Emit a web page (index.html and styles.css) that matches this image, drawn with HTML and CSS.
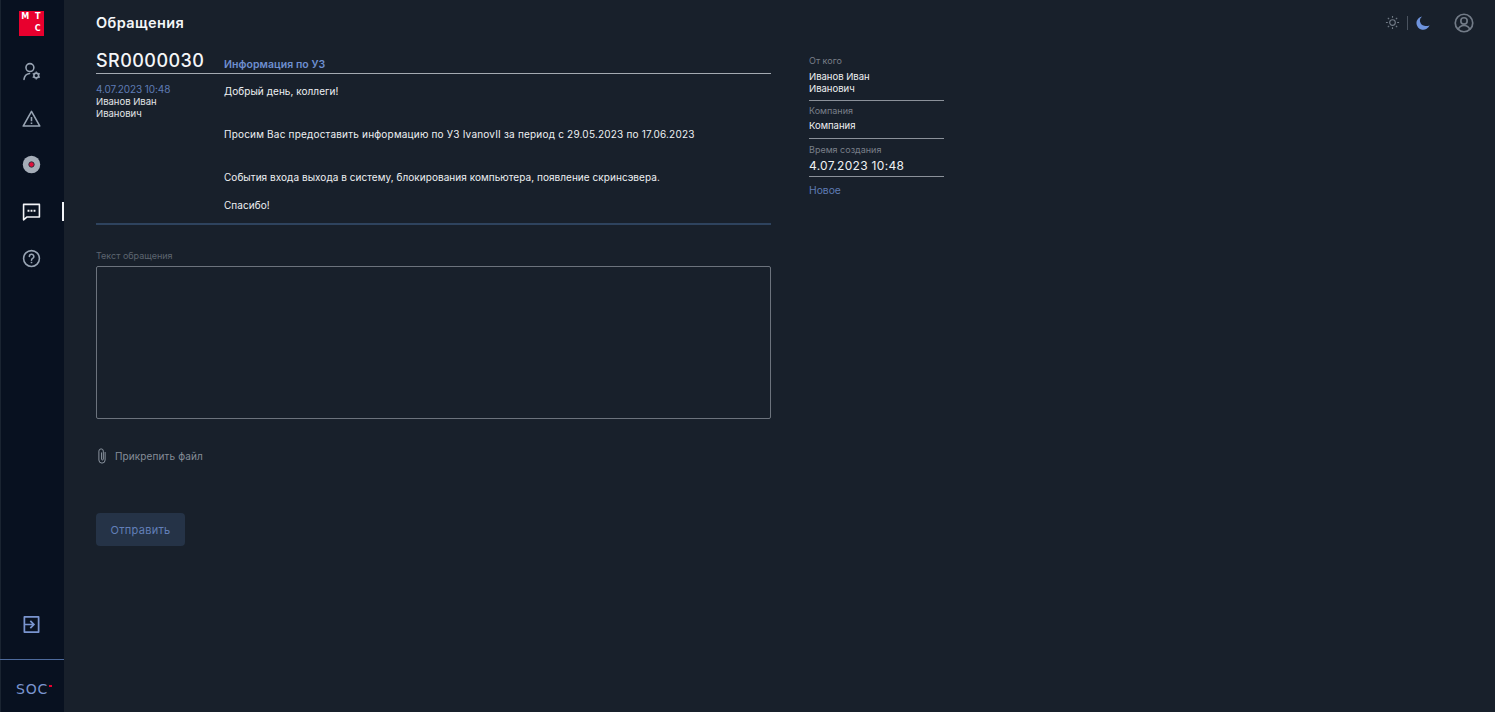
FILE: index.html
```html
<!DOCTYPE html>
<html lang="ru">
<head>
<meta charset="utf-8">
<title>Обращения</title>
<link rel="stylesheet" href="styles.css">
</head>
<body>
<div class="app">
  <nav class="sidebar">
    <div class="logo"><span>М</span><span>Т</span><span></span><span>С</span></div>
    <div class="nav-items">
      <a class="nav-item"><svg viewBox="0 0 24 24" class="ico" fill="none" stroke="#98a4b3" stroke-width="2"><circle cx="10" cy="7" r="5"/><path d="M2.500 22c.5-4 3-7 7-7.500" stroke-linecap="round"/><circle cx="18" cy="17" r="3"/><path d="M18 12v1.500M18 20.500v1.500M13.500 14.500l1.500 1M21 18.500l1.500 1M13.500 19.500l1.500-1M21 15.500l1.500-1" stroke-width="1.600"/></svg></a>
      <a class="nav-item"><svg viewBox="0 0 24 24" class="ico" fill="none" stroke="#98a4b3" stroke-width="2"><path d="M12 3 1.500 21.500h21z" stroke-linejoin="round"/><path d="M12 10v5.500M12 17.200v1.600"/></svg></a>
      <a class="nav-item"><svg viewBox="0 0 24 24" class="ico"><circle cx="12" cy="12" r="11" fill="#a5adb8"/><circle cx="12" cy="12" r="3.400" fill="#e0103c" stroke="#2a2f3d" stroke-width="1.200"/></svg></a>
      <a class="nav-item active"><svg viewBox="0 0 24 24" class="ico" fill="none" stroke="#f2f4f7" stroke-width="2"><path d="M2 3h20v16H6l-4 3.500z" stroke-linejoin="round"/><path d="M7 11h2.400M10.800 11h2.400M14.600 11h2.400" stroke-width="2.400"/></svg></a>
      <a class="nav-item"><svg viewBox="0 0 24 24" class="ico" fill="none" stroke="#98a4b3" stroke-width="2"><circle cx="12" cy="12" r="10"/><path d="M9.300 9.500a2.800 2.800 0 1 1 4.200 2.400c-1 .6-1.500 1.100-1.500 2.300" stroke-linecap="round"/><path d="M12 16.200v1.800"/></svg></a>
    </div>
    <a class="collapse"><svg viewBox="0 0 24 24" class="ico" fill="none" stroke="#7a95cf" stroke-width="2.200"><path d="M3 2.500h18v19H3z" stroke-linejoin="round"/><path d="M3 12h12M10.500 7.500l4.500 4.500-4.500 4.500"/></svg></a>
    <div class="brand">SOC<i class="brand-mark"></i></div>
  </nav>
  <main class="main">
    <header class="topbar">
      <h1>Обращения</h1>
      <div class="tools">
        <svg viewBox="0 0 16 16" class="tool-sun" fill="none" stroke="#727b87" stroke-width="1.200"><circle cx="8" cy="8" r="3"/><path d="M8 1v2M8 13v2M1 8h2M13 8h2M3 3l1.400 1.400M11.600 11.600 13 13M3 13l1.400-1.400M11.600 4.400 13 3"/></svg>
        <span class="tool-sep"></span>
        <svg viewBox="0 0 16 16" class="tool-moon"><path d="M7 .5A7.700 7.700 0 1 0 15.500 10.500 7 7 0 0 1 9.500 11 5.800 5.800 0 0 1 7 .5z" fill="#6e93dc"/></svg>
        <svg viewBox="0 0 24 24" class="tool-user" fill="none" stroke="#727b87" stroke-width="2"><circle cx="12" cy="12" r="10.500"/><circle cx="12" cy="9.500" r="3.800"/><path d="M5 20c1-3.500 3.500-5 7-5s6 1.500 7 5"/></svg>
      </div>
    </header>
    <div class="content">
      <section class="ticket">
        <div class="ticket-head">
          <div class="ticket-id">SR0000030</div>
          <div class="ticket-subject">Информация по УЗ</div>
        </div>
        <div class="message">
          <div class="meta">
            <div class="meta-date">4.07.2023 10:48</div>
            <div class="meta-name">Иванов Иван Иванович</div>
          </div>
          <div class="body">
            <p>Добрый день, коллеги!</p>
            <p class="gap wide">Просим Вас предоставить информацию по УЗ IvanovII за период с 29.05.2023 по 17.06.2023</p>
            <p class="gap">События входа выхода в систему, блокирования компьютера, появление скринсэвера.</p>
            <p class="gap-sm">Спасибо!</p>
          </div>
        </div>
        <label class="field-label" for="text">Текст обращения</label>
        <textarea id="text" class="field"></textarea>
        <div class="attach">
          <svg viewBox="0 0 12 18" class="clip" fill="none" stroke="#8b94a0" stroke-width="1.100"><path d="M9.500 4.500v9a3.500 3.500 0 0 1-7 0V3.500a2.500 2.500 0 0 1 5 0v9a1 1 0 0 1-2 0V5"/></svg>
          <span>Прикрепить файл</span>
        </div>
        <button class="send" type="button">Отправить</button>
      </section>
      <aside class="info">
        <div class="info-block from">
          <div class="info-label">От кого</div>
          <div class="info-value">Иванов Иван Иванович</div>
        </div>
        <div class="info-block company">
          <div class="info-label">Компания</div>
          <div class="info-value">Компания</div>
        </div>
        <div class="info-block created">
          <div class="info-label">Время создания</div>
          <div class="info-time">4.07.2023 10:48</div>
        </div>
        <div class="status">Новое</div>
      </aside>
    </div>
  </main>
</div>
</body>
</html>
```

FILE: styles.css
```css
* { box-sizing: border-box; }
html, body { margin: 0; height: 100%; }
body {
  background: #18202b;
  color: #f2f4f7;
  font-family: Inter, "Noto Sans", sans-serif;
  overflow: hidden;
}
.app { display: flex; height: 712px; }

.sidebar {
  width: 64px;
  flex: none;
  background: #081120;
  box-shadow: inset 1px 0 0 #1a2431;
  display: flex;
  flex-direction: column;
  align-items: center;
  padding-right: 1px;
}
.logo {
  width: 25px;
  height: 25px;
  margin-top: 11px;
  background: #e8002e;
  display: grid;
  grid-template-columns: 1fr 1fr;
  grid-template-rows: 1fr 1fr;
  padding: 1px 0 0;
  font-family: "DejaVu Sans", sans-serif;
  font-size: 8px;
  font-weight: 700;
  line-height: 10px;
  color: #fff;
  text-align: center;
}
.nav-items {
  margin-top: 12px;
  display: flex;
  flex-direction: column;
  align-self: stretch;
  flex: 1;
}
.nav-item {
  height: 46.750px;
  display: flex;
  align-items: center;
  justify-content: center;
  position: relative;
}
.ico { width: 19px; height: 19px; display: block; }
.nav-item.active::after {
  content: "";
  position: absolute;
  right: -1px;
  top: 14px;
  width: 2px;
  height: 19px;
  background: #f2f4f7;
}
.collapse { height: 24px; margin-bottom: 20px; }
.brand {
  align-self: stretch;
  margin-right: -1px;
  height: 53px;
  border-top: 1px solid #4d6a9c;
  color: #7a95cf;
  font-family: "DejaVu Sans", sans-serif;
  font-size: 14px;
  letter-spacing: .8px;
  text-align: center;
  line-height: 59px;
  position: relative;
}
.brand-mark {
  position: absolute;
  left: 49px;
  top: 25px;
  width: 3px;
  height: 1.500px;
  background: #e8002e;
}

.main { flex: 1; padding: 0 0 0 32px; min-width: 0; }
.topbar {
  height: 45px;
  display: flex;
  align-items: center;
  justify-content: space-between;
}
.topbar h1 {
  margin: 0;
  font-size: 14.500px;
  font-weight: 600;
  letter-spacing: .4px;
  color: #f4f6f8;
}
.tools { display: flex; align-items: center; padding-right: 21px; }
.tool-sun { width: 15px; height: 15px; }
.tool-sep { width: 1px; height: 14px; background: #4a535f; margin: 0 8px 0 7px; }
.tool-moon { width: 14px; height: 14px; margin-right: 24px; }
.tool-user { width: 20px; height: 20px; }

.content { display: flex; gap: 38px; align-items: flex-start; }
.ticket { width: 675px; flex: none; }
.ticket-head {
  display: flex;
  align-items: flex-end;
  height: 29px;
  border-bottom: 1px solid #a4aab2;
}
.ticket-id {
  width: 128px;
  font-size: 18px;
  font-weight: 500;
  letter-spacing: .45px;
  line-height: 27px;
  margin-bottom: -1px;
  color: #f4f6f8;
}
.ticket-subject {
  font-size: 10.500px;
  font-weight: 600;
  color: #6e8fd0;
  line-height: 14px;
  letter-spacing: .05px;
  margin-bottom: 1px;
}
.message {
  display: flex;
  height: 151px;
  border-bottom: 2px solid #2e435e;
  padding-top: 9px;
}
.meta { width: 128px; flex: none; font-size: 9.500px; line-height: 12px; padding-right: 50px; }
.meta-date { color: #5f7cb5; font-size: 10px; white-space: nowrap; letter-spacing: -.08px; line-height: 12px; }
.meta-name { color: #e2e5e9; margin-top: 1px; }
.body { font-size: 10px; line-height: 14px; color: #eef0f3; padding-top: 1px; }
.body p { margin: 0; white-space: nowrap; letter-spacing: .05px; }
.body .wide { letter-spacing: .2px; }
.body .gap { margin-top: 29px; }
.body .gap-sm { margin-top: 14px; }

.field-label {
  display: block;
  margin-top: 25px;
  font-size: 9px;
  line-height: 12px;
  color: #5d6570;
}
.field {
  display: block;
  width: 675px;
  height: 153px;
  margin-top: 4px;
  background: transparent;
  border: 1px solid #6c737d;
  border-radius: 2px;
  resize: none;
  outline: none;
}
.attach {
  display: flex;
  align-items: center;
  gap: 7px;
  margin-top: 29px;
  height: 16px;
  font-size: 10px;
  color: #858d98;
  letter-spacing: .12px;
}
.clip { width: 12px; height: 16px; }
.send {
  display: block;
  margin-top: 49px;
  width: 89px;
  height: 33px;
  border: 0;
  border-radius: 4px;
  background: #253347;
  color: #627fb8;
  font: 400 11px Inter, "Noto Sans", sans-serif;
  letter-spacing: .3px;
}

.info { width: 135px; flex: none; padding-top: 10px; }
.info-block { border-bottom: 1px solid #8b919a; }
.info-block.from { padding-bottom: 5px; margin-bottom: 4px; }
.info-block.company { padding-bottom: 6px; margin-bottom: 5px; }
.info-block.created { padding-bottom: 2px; margin-bottom: 6px; }
.info-label { font-size: 9px; line-height: 12px; color: #787f89; }
.info-value { font-size: 9.500px; line-height: 12px; color: #eef0f3; margin-top: 4px; padding-right: 50px; }
.info-block.company .info-value { margin-top: 3px; }
.info-time { font-size: 12px; line-height: 16px; color: #eef0f3; margin-top: 2px; letter-spacing: .3px; }
.status { font-size: 10.300px; line-height: 14px; color: #5f7cb5; }
```
